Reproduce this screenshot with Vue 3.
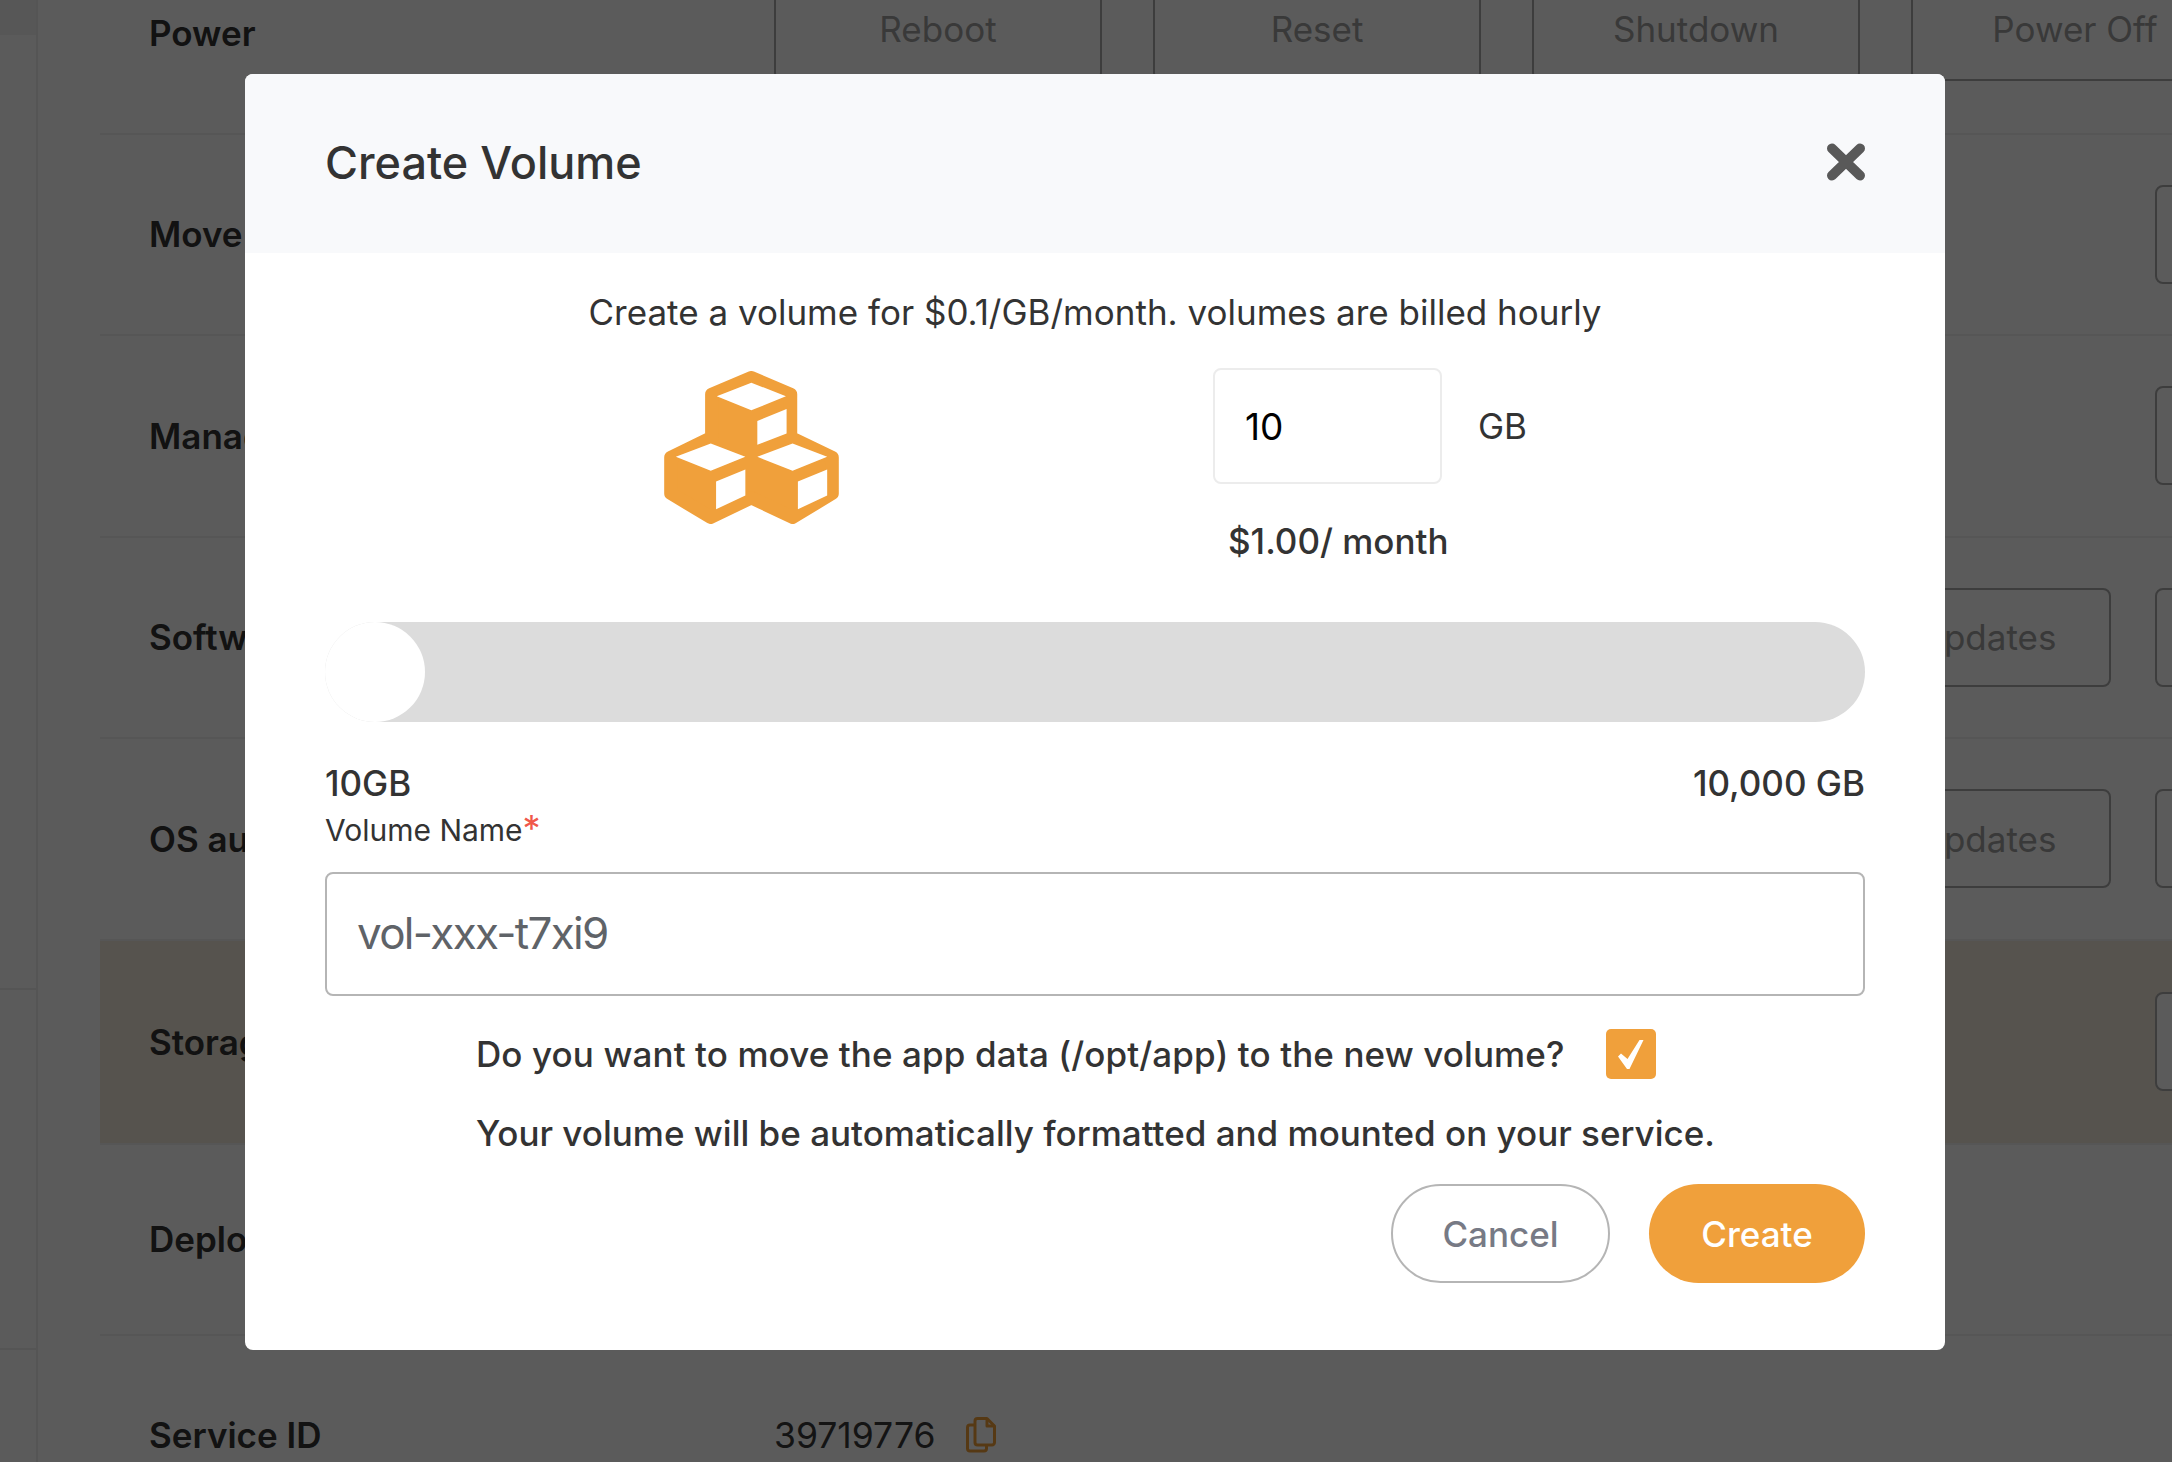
<template>
  <div class="page">
    <aside class="rail">
      <i class="rail-top"></i>
      <i class="rail-line second"></i>
      <i class="rail-line third"></i>
    </aside>
    <main class="table">
      <div
        v-for="row in rows"
        :key="row.label"
        class="row"
        :class="{ active: row.active, short: row.short }"
      >
        <span class="label">{{ row.label }}</span>
        <div v-if="row.power" class="power">
          <button v-for="action in powerActions" :key="action">{{ action }}</button>
        </div>
        <div v-else-if="row.value" class="value">
          {{ row.value }}
          <svg class="copy" viewBox="0 0 30 36" fill="none" stroke="#f2a03a" stroke-width="3" stroke-linejoin="round">
            <path d="M9 8H4A2.5 2.5 0 0 0 1.500 10.500V31.500A2.500 2.500 0 0 0 4 34H18A2.500 2.500 0 0 0 20.500 31.500V28" />
            <path d="M11.500 1.500H21L28.500 9V25.500A2.500 2.500 0 0 1 26 28H11.500A2.500 2.500 0 0 1 9 25.500V4A2.500 2.500 0 0 1 11.500 1.500Z" />
            <path d="M21 1.500V9H28.500" />
          </svg>
        </div>
        <div v-else-if="!row.short" class="side-actions">
          <button v-if="row.action" class="side-btn">{{ row.action }}</button>
          <button class="side-btn stub"></button>
        </div>
      </div>
    </main>

    <div class="overlay"></div>
    <div class="modal-wrap">
      <section class="modal">
        <header class="modal-head">
          <h2>Create Volume</h2>
          <svg class="close" viewBox="0 0 40 38">
            <path d="M6 5.500l28 27M34 5.500L6 32.500" stroke="#595959" stroke-width="10" stroke-linecap="round" />
          </svg>
        </header>
        <div class="modal-body">
          <p class="intro">Create a volume for $0.1/GB/month. volumes are billed hourly</p>
          <div class="size">
            <svg class="cubes" viewBox="72 62 525 460">
              <path
                fill="#f0a03b"
                stroke="#f0a03b"
                stroke-width="40"
                stroke-linejoin="round"
                d="M334 82L452 132V262L577 322V430L458 502L334 443L212 502L92 430V322L215 262V132Z"
              />
              <path
                fill="#fff"
                d="M230 138L334 97L438 138L334 180ZM352 212L440 176V250L352 284ZM107 320L212 280L316 320L212 362ZM228 394L316 358V436L228 478ZM352 320L458 280L562 320L458 362ZM474 394L562 358V436L474 478Z"
              />
            </svg>
            <div class="size-fields">
              <div class="size-input">
                <input class="gb" type="text" value="10" />
                <span>GB</span>
              </div>
              <p class="price">$1.00/ month</p>
            </div>
          </div>
          <div class="slider"><i class="thumb"></i></div>
          <div class="range">
            <span>10GB</span>
            <span>10,000 GB</span>
          </div>
          <label class="name-label">Volume Name<em>*</em></label>
          <input class="name" type="text" value="vol-xxx-t7xi9" />
          <div class="move">
            <span>Do you want to move the app data (/opt/app) to the new volume?</span>
            <span class="check">
              <svg viewBox="0 0 50 50">
                <path fill="#fff" d="M12 27.500L15 24.500L21.500 30L33.500 11H37.500L23.500 40H21Z" />
              </svg>
            </span>
          </div>
          <p class="note">Your volume will be automatically formatted and mounted on your service.</p>
          <div class="buttons">
            <button class="cancel">Cancel</button>
            <button class="create">Create</button>
          </div>
        </div>
      </section>
    </div>
  </div>
</template>

<script setup>
const powerActions = ["Reboot", "Reset", "Shutdown", "Power Off"];
const rows = [
  { label: "Power", power: true },
  { label: "Move" },
  { label: "Manage" },
  { label: "Software", action: "Check for updates" },
  { label: "OS auto updates", action: "Check for updates" },
  { label: "Storage", active: true },
  { label: "Deploy", short: true },
  { label: "Service ID", value: "39719776" },
];
</script>

<style>
html,
body {
  margin: 0;
  overflow: hidden;
}
</style>

<style scoped>
.page {
  position: relative;
  display: flex;
  width: 2172px;
  height: 1462px;
  overflow: hidden;
  background: #fff;
  font-family: Inter, "Liberation Sans", sans-serif;
  color: #333;
}
.rail {
  position: relative;
  flex: 0 0 36px;
  border-right: 2px solid #eee;
}
.rail-top {
  display: block;
  height: 35px;
  background: #f3f3f3;
}
.rail-line {
  position: absolute;
  left: 0;
  right: 0;
  height: 2px;
  background: #eee;
}
.rail-line.second {
  top: 988px;
}
.rail-line.third {
  top: 1348px;
}
.table {
  flex: 1;
  min-width: 0;
  margin-top: -67px;
  padding-left: 62px;
}
.row {
  box-sizing: border-box;
  display: flex;
  align-items: center;
  height: 201.5px;
  border-bottom: 2px solid #f0f0f0;
  padding-left: 49px;
}
.row.active {
  height: 204px;
  background: #f1e8da;
}
.row.short {
  height: 191px;
}
.label {
  flex: 0 0 625px;
  font-size: 35px;
  font-weight: 600;
}
.power {
  display: flex;
  gap: 51px;
  align-self: flex-start;
  height: 148px;
}
.power button {
  flex: none;
  width: 328px;
  height: 148px;
  padding: 44px 0 0;
  border: 2px solid #aaa;
  border-radius: 8px;
  background: #fff;
  color: #a0a0a0;
  font: 400 35px Inter, sans-serif;
}
.value {
  display: flex;
  align-items: center;
  gap: 31px;
  font-size: 35.500px;
  color: #3a3a3a;
}
.copy {
  width: 30px;
  height: 36px;
}
.side-actions {
  display: flex;
  flex: none;
  gap: 44px;
  margin-left: auto;
  margin-right: -183px;
}
.side-btn {
  flex: none;
  width: 414px;
  height: 99px;
  border: 2px solid #aaa;
  border-radius: 8px;
  background: #fff;
  color: #a0a0a0;
  font: 400 35px Inter, sans-serif;
}
.side-btn.stub {
  width: 200px;
}
.overlay {
  position: absolute;
  inset: 0;
  background: rgba(0, 0, 0, 0.643);
}
.modal-wrap {
  position: absolute;
  inset: 0;
  display: flex;
  justify-content: center;
  align-items: flex-start;
  padding: 74px 0 0 18px;
}
.modal {
  width: 1700px;
  height: 1276px;
  overflow: hidden;
  border-radius: 8px;
  background: #fff;
}
.modal-head {
  box-sizing: border-box;
  display: flex;
  align-items: center;
  justify-content: space-between;
  height: 179px;
  padding: 0 79px 3px 80px;
  background: #f8f9fb;
}
.modal-head h2 {
  margin: 0;
  font-size: 45px;
  font-weight: 500;
  color: #333;
}
.close {
  width: 40px;
  height: 38px;
}
.modal-body {
  padding: 37px 80px 0;
  font-size: 35px;
  color: #333;
}
.intro {
  margin: 0;
  line-height: 44px;
  text-align: center;
}
.size {
  display: flex;
  align-items: flex-start;
  margin-top: 34px;
  padding-left: 339px;
}
.cubes {
  flex: none;
  width: 175px;
  height: 153px;
  margin-top: 3px;
}
.size-fields {
  margin-left: 374px;
}
.size-input {
  display: flex;
  align-items: center;
  gap: 36px;
}
.gb {
  box-sizing: border-box;
  width: 229px;
  height: 116px;
  padding: 0 30px;
  border: 2px solid #ececec;
  border-radius: 8px;
  color: #000;
  font: 400 37px Inter, sans-serif;
  outline: none;
}
.price {
  margin: 35px 0 0 15px;
  line-height: 44px;
  font-weight: 500;
}
.slider {
  height: 100px;
  margin-top: 59px;
  border-radius: 50px;
  background: #dcdcdc;
}
.thumb {
  display: block;
  width: 100px;
  height: 100px;
  border-radius: 50%;
  background: #fff;
}
.range {
  display: flex;
  justify-content: space-between;
  margin-top: 39px;
  line-height: 44px;
  font-weight: 500;
}
.name-label {
  display: block;
  margin-top: 5px;
  font-size: 30px;
  line-height: 40px;
}
.name-label em {
  color: #f0584a;
  font-size: 36px;
  font-style: normal;
  line-height: 20px;
}
.name {
  display: block;
  box-sizing: border-box;
  width: 100%;
  height: 124px;
  margin-top: 22px;
  padding: 0 30px 2px;
  border: 2px solid #b5b5b5;
  border-radius: 8px;
  color: #5f6368;
  font: 400 44px Inter, sans-serif;
  letter-spacing: -1.700px;
  outline: none;
}
.move {
  display: flex;
  align-items: center;
  gap: 41px;
  margin-top: 33px;
  padding-left: 151px;
  font-weight: 500;
  letter-spacing: 0.1px;
}
.check {
  flex: none;
  width: 50px;
  height: 50px;
  border-radius: 5px;
  background: #f0a03b;
}
.check svg {
  display: block;
}
.note {
  margin: 32px 0 0 151px;
  line-height: 44px;
  font-weight: 500;
}
.buttons {
  display: flex;
  justify-content: flex-end;
  gap: 39px;
  margin-top: 29px;
}
.buttons button {
  height: 99px;
  border-radius: 50px;
  font: 500 35px Inter, sans-serif;
}
.cancel {
  width: 219px;
  border: 2px solid #b5b5b5;
  background: #fff;
  color: #777a85;
}
.create {
  width: 216px;
  border: 0;
  background: #f0a03b;
  color: #fff;
}
</style>
